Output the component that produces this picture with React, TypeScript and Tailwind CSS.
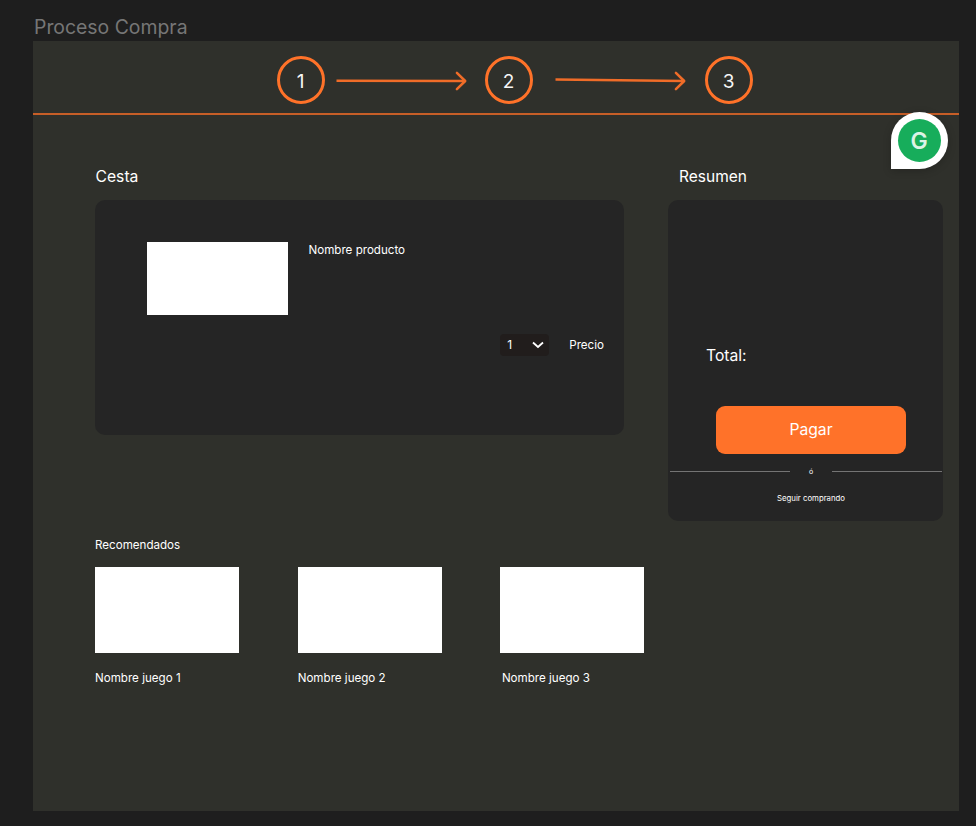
function Step({ label, className = "" }: { label: string; className?: string }) {
  return (
    <div
      className={`flex h-12 w-12 shrink-0 items-center justify-center rounded-full border-[3px] border-[#ff7229] pr-px pt-[3px] text-[19px] leading-6 text-[#f6f6f6] ${className}`}
    >
      {label}
    </div>
  );
}

function Arrow({ drop, className = "" }: { drop: number; className?: string }) {
  return (
    <svg
      className={`shrink-0 ${className}`}
      width="132"
      height="22"
      viewBox="0 0 132 22"
      fill="none"
      stroke="#f06c28"
      strokeWidth="2.5"
      strokeLinecap="round"
      strokeLinejoin="round"
    >
      <path d={`M0.5 ${10.8 - drop}L129 11`} strokeLinecap="butt" />
      <path d="M120.9 2.8L129.2 11L120.9 19.2" />
    </svg>
  );
}

const games = [
  { name: "Nombre juego 1", offset: "pl-0" },
  { name: "Nombre juego 2", offset: "pl-0" },
  { name: "Nombre juego 3", offset: "pl-[1.5px]" },
];

export default function App() {
  return (
    <div className="h-[826px] w-[976px] overflow-hidden bg-[#1e1e1e] pl-[33px] pt-4 font-['Inter',sans-serif] text-white">
      <div className="h-[24.5px] pl-px text-[19.4px] leading-[22px] text-[#767676]">Proceso Compra</div>
      <div className="relative h-[770px] w-[926px] bg-[#2f302b]">
        <header className="flex h-[72px] items-start pl-[244px] pt-[15.5px]">
          <Step label="1" />
          <Arrow drop={0.1} className="ml-[11px] mt-[13.5px]" />
          <Step label="2" className="ml-[17px]" />
          <Arrow drop={1.4} className="ml-[22px] mt-[13.5px]" />
          <Step label="3" className="ml-[18px]" />
        </header>
        <div className="h-0.5 bg-[#c75e27]" />

        <div className="absolute left-[857.5px] top-[71px] flex h-[57px] w-[57px] items-center justify-center rounded-full rounded-bl-none bg-white shadow-[0_2px_8px_rgba(0,0,0,0.2)]">
          <div className="flex h-[43px] w-[43px] items-center justify-center rounded-full bg-[#17ad5b] pt-0.5 text-[23px] font-semibold leading-none text-[#dcf3e6]">
            G
          </div>
        </div>

        <main className="flex pl-[62px] pt-[52px]">
          <div className="w-[573px] shrink-0">
            <h1 className="h-[33px] pl-[0.5px] text-[15.7px] leading-5">Cesta</h1>
            <section className="h-[235px] w-[529px] rounded-[10px] bg-[#252525] pl-[51.5px] pr-5 pt-[42px]">
              <div className="flex">
                <div className="h-[73px] w-[141px] bg-white" />
                <div className="ml-[21px] pt-px text-[11.6px] leading-[15px]">Nombre producto</div>
              </div>
              <div className="mt-[19px] flex items-center justify-end">
                <div className="flex h-[22px] w-[49px] items-center justify-between rounded-[4px] bg-[#211d1c] pl-[7px] pr-[5px] text-[12px]">
                  <span className="pt-px">1</span>
                  <svg width="12" height="8" viewBox="0 0 12 8" fill="none" stroke="white" strokeWidth="1.8">
                    <path d="M1 1.5L6 6L11 1.5" />
                  </svg>
                </div>
                <div className="ml-5 pt-px text-[11.6px] leading-[15px]">Precio</div>
              </div>
            </section>
            <h2 className="mt-[103px] text-[11.6px] leading-[15px]">Recomendados</h2>
            <div className="mt-[14px] flex gap-[58.7px]">
              {games.map((game) => (
                <div key={game.name} className="w-36 shrink-0">
                  <div className="h-[86px] bg-white" />
                  <div className={`mt-[18px] text-[11.6px] leading-[15px] ${game.offset}`}>{game.name}</div>
                </div>
              ))}
            </div>
          </div>

          <aside className="w-[275px] shrink-0">
            <h1 className="h-[33px] pl-[11px] text-[15.5px] leading-5">Resumen</h1>
            <section className="h-[321px] rounded-[10px] bg-[#252525] pt-[146px]">
              <div className="pl-[38px] text-[15.7px] leading-5">Total:</div>
              <button className="ml-12 mt-10 flex h-12 w-[190px] items-center justify-center rounded-[9px] bg-[#ff7229] pt-px text-[15.7px] leading-5">
                Pagar
              </button>
              <div className="mt-[14px] flex h-2 items-center justify-between pl-0.5 pr-px">
                <div className="h-px w-[120px] bg-[#747474]" />
                <div className="text-[7px] leading-2">ó</div>
                <div className="h-px w-[110px] bg-[#747474]" />
              </div>
              <div className="mt-[17px] pl-[11px] text-center text-[7.8px] leading-[10px]">Seguir comprando</div>
            </section>
          </aside>
        </main>
      </div>
    </div>
  );
}
